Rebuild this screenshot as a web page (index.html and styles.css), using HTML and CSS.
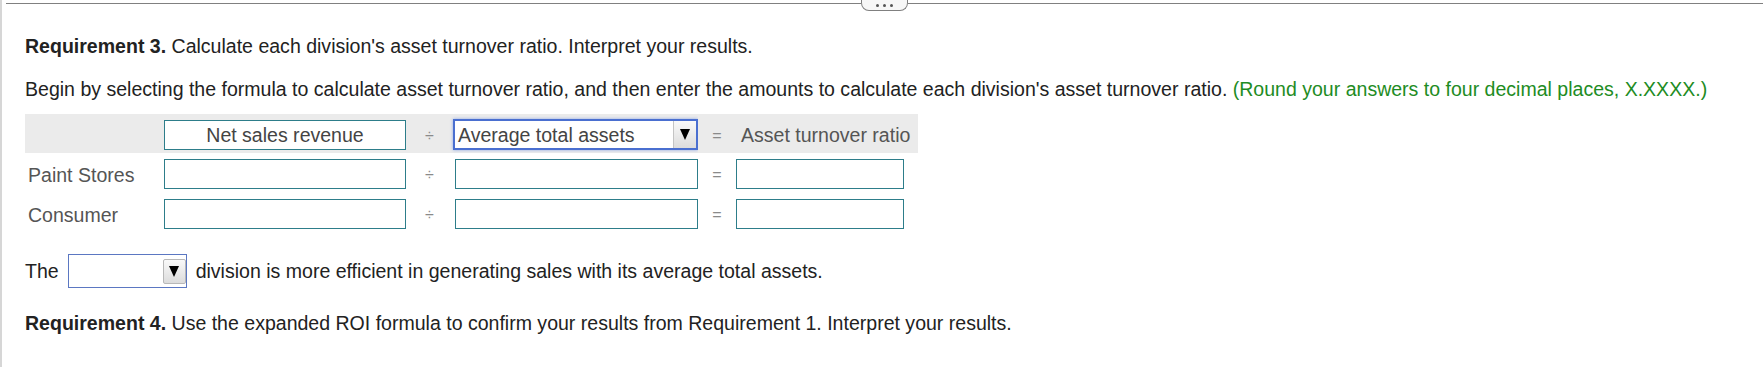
FILE: index.html
```html
<!DOCTYPE html>
<html lang="en">
<head>
    <meta charset="UTF-8">
    <title>Requirement 3</title>
    <link rel="stylesheet" href="styles.css">
</head>
<body>
    <div class="topbar">
        <span class="rule"></span>
        <span class="more"><i></i><i></i><i></i></span>
        <span class="rule"></span>
    </div>
    <div class="content">
        <p class="line first"><b>Requirement 3.</b> Calculate each division's asset turnover ratio. Interpret your results.</p>
        <p class="line second">Begin by selecting the formula to calculate asset turnover ratio, and then enter the amounts to calculate each division's asset turnover ratio. <span class="hint">(Round your answers to four decimal places, X.XXXX.)</span></p>
        <table class="formula">
            <colgroup>
                <col class="c-label">
                <col class="c-num">
                <col class="c-op">
                <col class="c-den">
                <col class="c-eq">
                <col class="c-res">
            </colgroup>
            <tr class="head">
                <td></td>
                <td class="cell"><input class="box centered" type="text" value="Net sales revenue" readonly></td>
                <td class="op">&divide;</td>
                <td class="cell">
                    <div class="pick focused">
                        <span class="pick-text">Average total assets</span>
                        <span class="pick-btn"><span class="tri"></span></span>
                    </div>
                </td>
                <td class="op">=</td>
                <td class="res-head">Asset turnover ratio</td>
            </tr>
            <tr>
                <td class="label">Paint Stores</td>
                <td class="cell"><input class="box" type="text"></td>
                <td class="op">&divide;</td>
                <td class="cell"><input class="box wide" type="text"></td>
                <td class="op">=</td>
                <td class="cell"><input class="box res" type="text"></td>
            </tr>
            <tr>
                <td class="label">Consumer</td>
                <td class="cell"><input class="box" type="text"></td>
                <td class="op">&divide;</td>
                <td class="cell"><input class="box wide" type="text"></td>
                <td class="op">=</td>
                <td class="cell"><input class="box res" type="text"></td>
            </tr>
        </table>
        <div class="answer">
            <span>The</span>
            <div class="pick small">
                <span class="pick-text"></span>
                <span class="pick-btn inset"><span class="tri"></span></span>
            </div>
            <span>division is more efficient in generating sales with its average total assets.</span>
        </div>
        <p class="line last"><b>Requirement 4.</b> Use the expanded ROI formula to confirm your results from Requirement 1. Interpret your results.</p>
    </div>
</body>
</html>
```

FILE: styles.css
```css
body {
    margin: 0;
    min-height: 367px;
    box-sizing: border-box;
    border-left: 2px solid #d6d6d6;
    background: #fff;
    font-family: "Liberation Sans", Arial, Helvetica, sans-serif;
    font-size: 19.55px;
    color: #222;
}

.topbar {
    display: flex;
    height: 12px;
    margin-left: 4px;
}
.rule {
    flex: 1;
    height: 1px;
    margin-top: 3px;
    background: #808080;
}
.more {
    width: 47px;
    height: 11px;
    box-sizing: border-box;
    border: 1px solid #808080;
    border-top: none;
    border-radius: 0 0 8px 8px;
    background: #f7f7f7;
    display: flex;
    justify-content: center;
    align-items: center;
    gap: 4px;
}
.more i {
    width: 3px;
    height: 3px;
    border-radius: 50%;
    background: #555;
}

.content {
    padding-left: 23px;
}
.line {
    margin: 0;
    line-height: 22px;
}
.first {
    margin-top: 23px;
}
.second {
    margin-top: 21px;
}
.hint {
    color: #1e8c24;
}

.formula {
    margin-top: 14px;
    border-collapse: collapse;
    border-spacing: 0;
    table-layout: fixed;
    width: 893px;
    color: #555;
}
.c-label { width: 139px; }
.c-num { width: 242px; }
.c-op { width: 47px; }
.c-den { width: 245px; }
.c-eq { width: 38px; }
.c-res { width: 182px; }

.formula td {
    padding: 0;
    vertical-align: middle;
    line-height: 22px;
}
.formula .head td {
    background: #ebebeb;
}
.formula .cell {
    padding: 6px 0 4px;
}
.formula .head .cell {
    padding: 6px 0 3px;
}
.formula .label {
    padding: 3px 0 0 3px;
    white-space: nowrap;
}
.formula .op {
    text-align: center;
    color: #8a8a8a;
    font-size: 16px;
    padding-top: 4px;
}
.formula .res-head {
    padding: 3px 0 0 5px;
    white-space: nowrap;
}

.box {
    display: block;
    width: 242px;
    height: 30px;
    box-sizing: border-box;
    margin: 0;
    padding: 0 4px;
    border: 1px solid #2d7d8a;
    border-radius: 0;
    background: #fff;
    font-family: inherit;
    font-size: 19.55px;
    color: #444;
    outline: none;
}
.box.centered {
    text-align: center;
}
.box.wide {
    width: 243px;
    margin-left: 2px;
}
.box.res {
    width: 168px;
}

.pick {
    display: flex;
    align-items: center;
    box-sizing: border-box;
    background: #fff;
    color: #444;
}
.pick.focused {
    width: 245px;
    height: 31px;
    margin-top: -1px;
    border: 2px solid #4a6fd0;
    box-shadow: 0 0 3px #8fa8e8;
}
.pick-text {
    flex: 1;
    padding-left: 3px;
    white-space: nowrap;
    overflow: hidden;
}
.pick-btn {
    width: 23px;
    height: 100%;
    box-sizing: border-box;
    display: flex;
    justify-content: center;
    align-items: center;
    border-left: 1px solid #c4c4c4;
    background: linear-gradient(#f9f9f9, #dcdcdc);
}
.tri {
    width: 0;
    height: 0;
    border-left: 5px solid transparent;
    border-right: 5px solid transparent;
    border-top: 11px solid #000;
}

.answer {
    display: flex;
    align-items: center;
    margin-top: 21px;
    height: 34px;
}
.pick.small {
    width: 119px;
    height: 34px;
    margin: 0 9px 0 9px;
    border: 1px solid #5b77c2;
}
.pick-btn.inset {
    height: 25px;
    border: 1px solid #b8b8b8;
    border-radius: 2px;
}

.last {
    margin-top: 24px;
}
```
